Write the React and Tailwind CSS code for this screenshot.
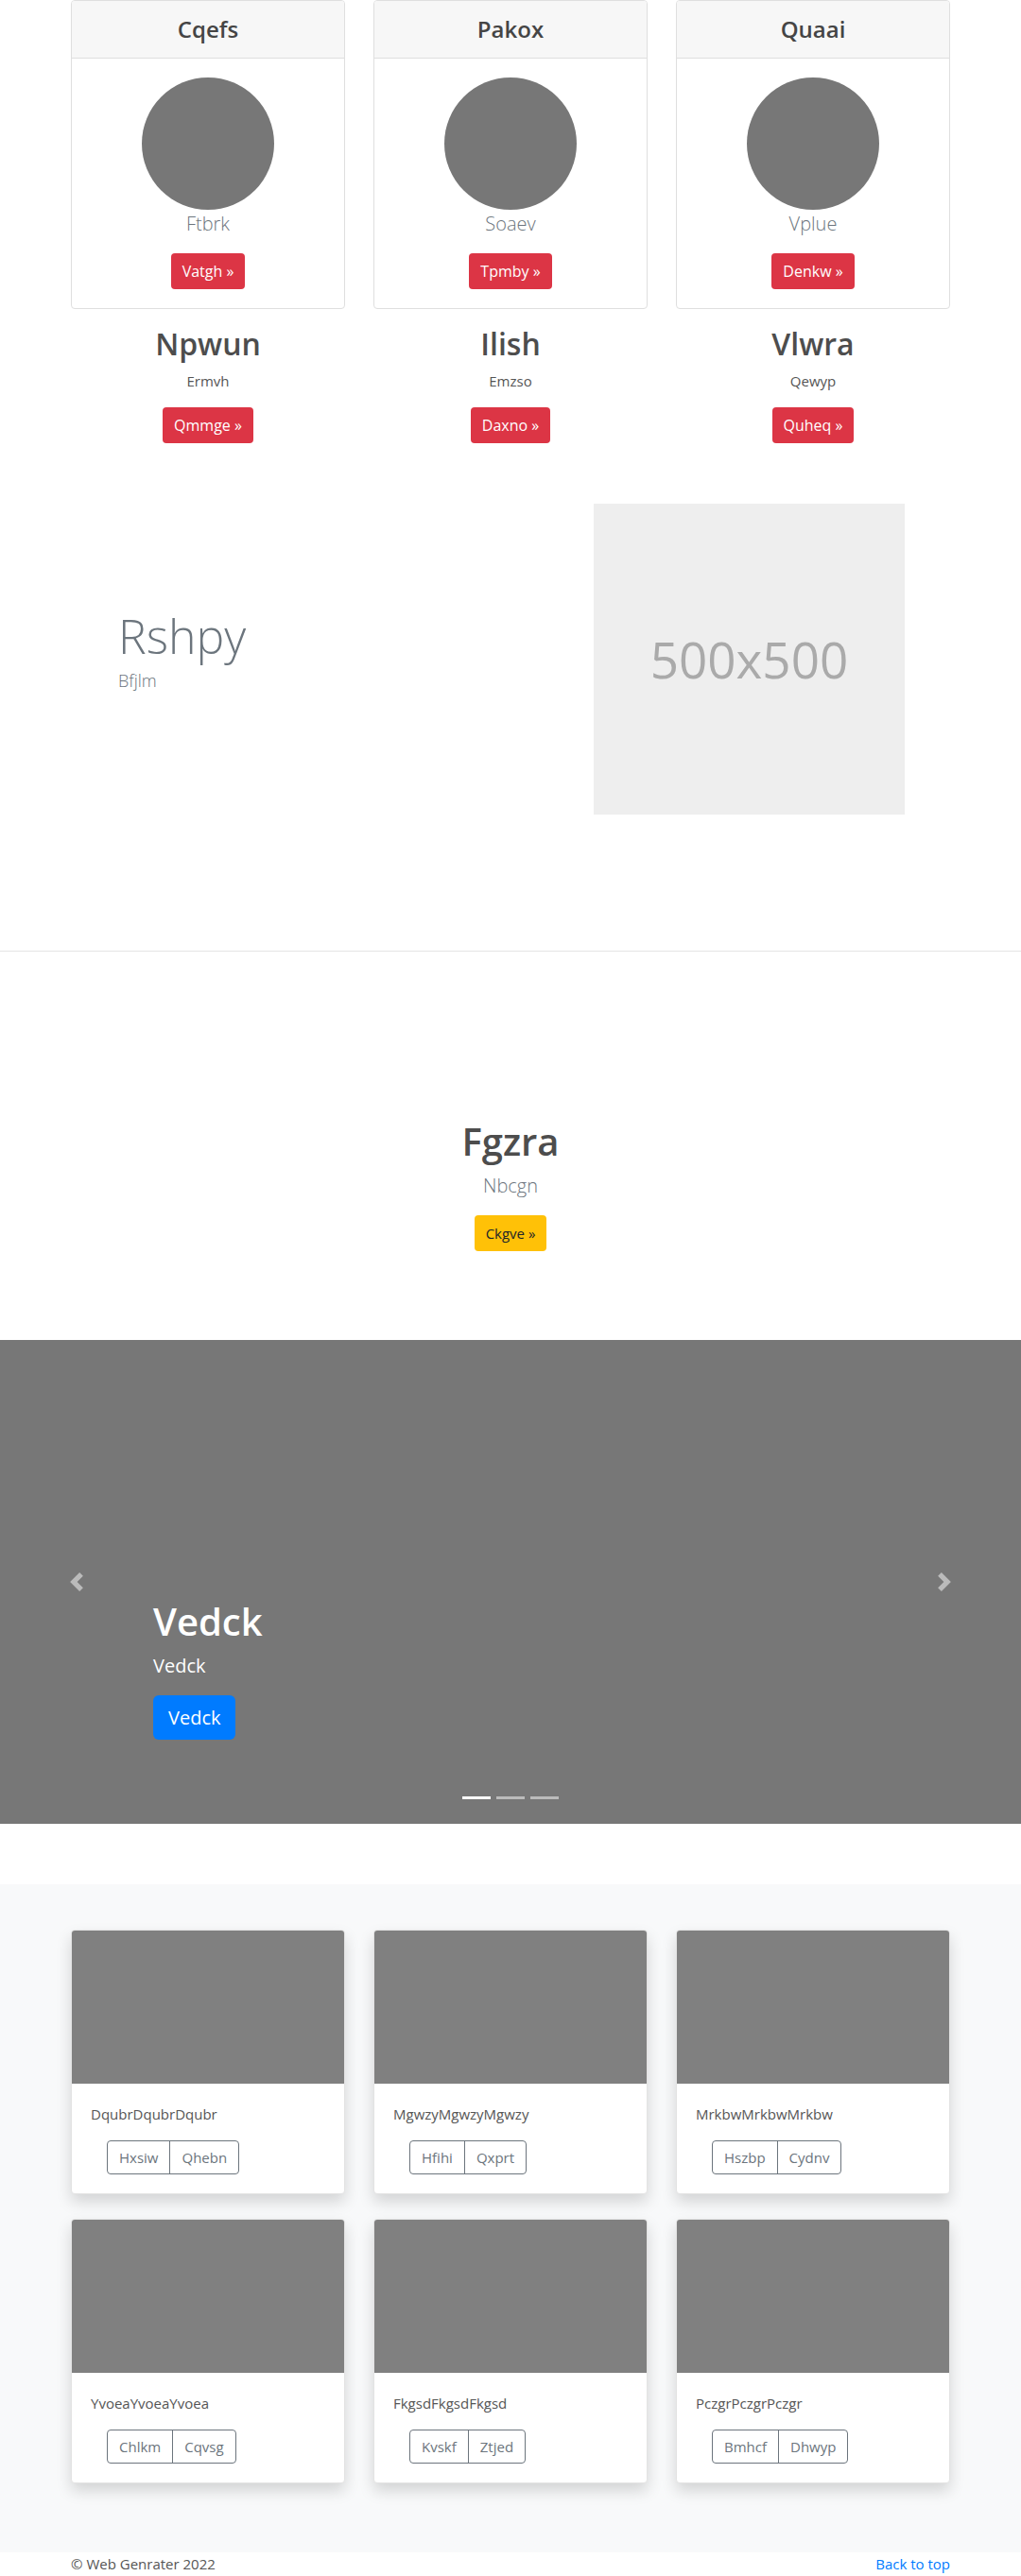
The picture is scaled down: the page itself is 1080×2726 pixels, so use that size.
import React from "react";

const features = [
  { title: "Cqefs", lead: "Ftbrk", btn: "Vatgh" },
  { title: "Pakox", lead: "Soaev", btn: "Tpmby" },
  { title: "Quaai", lead: "Vplue", btn: "Denkw" },
];

const marketing = [
  { title: "Npwun", text: "Ermvh", btn: "Qmmge" },
  { title: "Ilish", text: "Emzso", btn: "Daxno" },
  { title: "Vlwra", text: "Qewyp", btn: "Quheq" },
];

const albums = [
  { text: "DqubrDqubrDqubr", a: "Hxsiw", b: "Qhebn" },
  { text: "MgwzyMgwzyMgwzy", a: "Hfihi", b: "Qxprt" },
  { text: "MrkbwMrkbwMrkbw", a: "Hszbp", b: "Cydnv" },
  { text: "YvoeaYvoeaYvoea", a: "Chlkm", b: "Cqvsg" },
  { text: "FkgsdFkgsdFkgsd", a: "Kvskf", b: "Ztjed" },
  { text: "PczgrPczgrPczgr", a: "Bmhcf", b: "Dhwyp" },
];

// Top row: bordered card plus a heading block under it.
function FeatureColumn({ card, info }) {
  return (
    <div className="flex flex-col items-center text-center">
      <div className="w-full border border-[#dfdfdf] rounded-[4px] overflow-hidden">
        <div className="h-[61px] flex items-center justify-center bg-[#f7f7f7] border-b border-[#dfdfdf]">
          <h4 className="text-[24px] font-semibold text-[#454545]">{card.title}</h4>
        </div>
        <div className="p-5 flex flex-col items-center">
          <div className="w-[140px] h-[140px] rounded-full bg-[#777777]" />
          <p className="text-[20px] leading-[30px] font-light text-[#6c757d] mb-4">{card.lead}</p>
          <button className="h-[38px] px-3 rounded-[4px] bg-[#dc3545] text-white text-[16px]">
            {card.btn} »
          </button>
        </div>
      </div>
      <h2 className="mt-[18px] mb-2 text-[32px] leading-[38px] font-semibold text-[#4d4d4d]">
        {info.title}
      </h2>
      <p className="text-[15px] leading-6 text-[#555] mb-4">{info.text}</p>
      <button className="h-[38px] px-3 rounded-[4px] bg-[#dc3545] text-white text-[16px]">
        {info.btn} »
      </button>
    </div>
  );
}

function AlbumCard({ item }) {
  return (
    <div className="bg-white border border-[#e3e3e3] rounded-[4px] overflow-hidden shadow-[0_8px_16px_rgba(0,0,0,0.15)]">
      <div className="h-[162px] bg-[#808080]" />
      <div className="p-5">
        <p className="text-[15px] leading-6 text-[#555] mb-4">{item.text}</p>
        <div className="ml-[17px] inline-flex h-[36px] border border-[#6c757d] rounded-[4px] text-[15px] text-[#6c757d]">
          <button className="px-3">{item.a}</button>
          <button className="px-3 border-l border-[#6c757d]">{item.b}</button>
        </div>
      </div>
    </div>
  );
}

function Chevron({ dir }) {
  return (
    <svg width="20" height="20" viewBox="0 0 8 8" fill="rgba(255,255,255,0.5)">
      {dir === "left" ? (
        <path d="M5.25 0l-4 4 4 4 1.5-1.5L4.25 4l2.5-2.5L5.25 0z" />
      ) : (
        <path d="M2.75 0l-1.5 1.5L3.75 4l-2.5 2.5L2.75 8l4-4-4-4z" />
      )}
    </svg>
  );
}

export default function App() {
  return (
    <div className="bg-white font-['Open_Sans','Noto_Sans',sans-serif] text-[#212529]">
      {/* feature cards */}
      <div className="w-[960px] mx-auto px-[15px]">
        <div className="grid grid-cols-3 gap-[30px]">
          {features.map((card, i) => (
            <FeatureColumn key={card.title} card={card} info={marketing[i]} />
          ))}
        </div>
      </div>

      {/* featurette */}
      <div className="w-[960px] mx-auto flex items-center mt-[64px]">
        <div className="flex-1 pl-[65px] pb-[18px]">
          <h2 className="text-[50px] leading-[60px] font-light text-[#6c757d]">Rshpy</h2>
          <p className="mt-1 text-[18px] leading-[27px] font-light text-[#6c757d]">Bfjlm</p>
        </div>
        <div className="w-[329px] h-[329px] mr-[63px] bg-[#eeeeee] flex items-center justify-center">
          <span className="text-[53px] text-[#aaaaaa]">500x500</span>
        </div>
      </div>

      <hr className="mt-[144px] border-t border-[#e5e5e5]" />

      {/* centered call to action */}
      <div className="pt-[177px] pb-[94px] flex flex-col items-center text-center">
        <h1 className="text-[40px] leading-[48px] font-semibold text-[#4d4d4d] mb-2">Fgzra</h1>
        <p className="text-[20px] leading-[30px] font-light text-[#6c757d] mb-4">Nbcgn</p>
        <button className="h-[38px] px-3 rounded-[4px] bg-[#ffc107] text-[#212529] text-[15px]">
          Ckgve »
        </button>
      </div>

      {/* carousel */}
      <div className="relative h-[512px] bg-[#777777] mb-[64px]">
        <div className="absolute left-[71px] top-[246px]">
          <Chevron dir="left" />
        </div>
        <div className="absolute right-[71px] top-[246px]">
          <Chevron dir="right" />
        </div>
        <div className="absolute left-[162px] bottom-[89px] text-white">
          <h1 className="text-[40px] leading-[48px] font-semibold mb-2">Vedck</h1>
          <p className="text-[20px] leading-[30px] font-medium mb-4">Vedck</p>
          <button className="h-[47px] px-4 rounded-[6px] bg-[#007bff] text-white text-[20px] font-medium">
            Vedck
          </button>
        </div>
        <div className="absolute left-0 right-0 bottom-[26px] flex justify-center gap-[6px]">
          <span className="w-[30px] h-[3px] bg-white" />
          <span className="w-[30px] h-[3px] bg-white/50" />
          <span className="w-[30px] h-[3px] bg-white/50" />
        </div>
      </div>

      {/* album */}
      <div className="bg-[#f8f9fa] pt-12 pb-[73px]">
        <div className="w-[960px] mx-auto px-[15px] grid grid-cols-3 gap-x-[30px] gap-y-[26px]">
          {albums.map((item) => (
            <AlbumCard key={item.text} item={item} />
          ))}
        </div>
      </div>

      <footer className="w-[960px] mx-auto px-[15px] pb-12 flex justify-between text-[15px] leading-6">
        <p className="text-[#555]">© Web Genrater 2022</p>
        <a href="#" className="text-[#007bff]">Back to top</a>
      </footer>
    </div>
  );
}
